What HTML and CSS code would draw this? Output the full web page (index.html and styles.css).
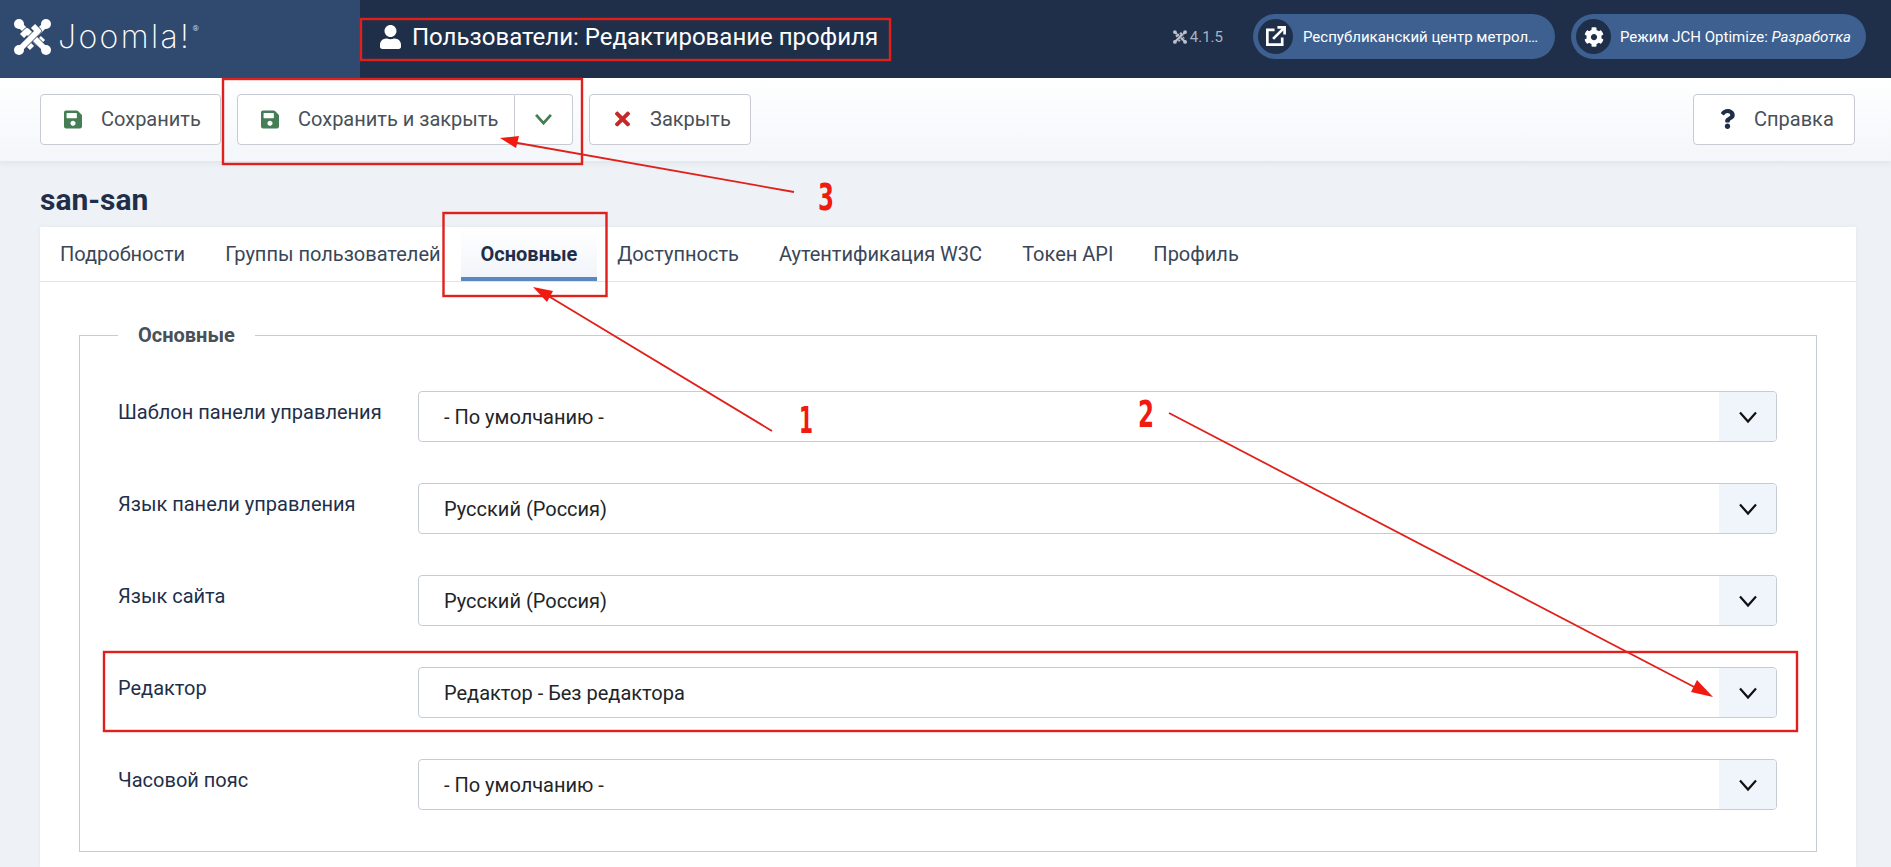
FILE: index.html
```html
<!DOCTYPE html>
<html lang="ru">
<head>
<meta charset="utf-8">
<title>Пользователи: Редактирование профиля</title>
<link rel="stylesheet" href="styles.css">
</head>
<body>
<svg class="defs" width="0" height="0" aria-hidden="true">
  <symbol id="i-save" viewBox="0 0 448 512"><path d="M433.941 129.941l-83.882-83.882A48 48 0 0 0 316.118 32H48C21.49 32 0 53.49 0 80v352c0 26.51 21.49 48 48 48h352c26.51 0 48-21.49 48-48V163.882a48 48 0 0 0-14.059-33.941zM224 416c-35.346 0-64-28.654-64-64 0-35.346 28.654-64 64-64s64 28.654 64 64c0 35.346-28.654 64-64 64zm96-304.52V212c0 6.627-5.373 12-12 12H76c-6.627 0-12-5.373-12-12V108c0-6.627 5.373-12 12-12h228.52c3.183 0 6.235 1.264 8.485 3.515l3.48 3.48A11.996 11.996 0 0 1 320 111.48z"/></symbol>
  <symbol id="i-times" viewBox="0 0 352 512"><path d="M242.72 256l100.07-100.07c12.28-12.28 12.28-32.19 0-44.48l-22.24-22.24c-12.28-12.28-32.19-12.28-44.48 0L176 189.28 75.93 89.21c-12.28-12.28-32.19-12.28-44.48 0L9.21 111.45c-12.28 12.28-12.28 32.19 0 44.48L109.28 256 9.21 356.07c-12.28 12.28-12.28 32.19 0 44.48l22.24 22.24c12.28 12.28 32.2 12.28 44.48 0L176 322.72l100.07 100.07c12.28 12.28 32.2 12.28 44.48 0l22.24-22.24c12.28-12.28 12.28-32.19 0-44.48L242.72 256z"/></symbol>
  <symbol id="i-question" viewBox="0 0 384 512"><path d="M202.021 0C122.202 0 70.503 32.703 29.914 91.026c-7.363 10.58-5.093 25.086 5.178 32.874l43.138 32.709c10.373 7.865 25.132 6.026 33.253-4.148 25.049-31.381 43.63-49.449 82.757-49.449 30.764 0 68.816 19.799 68.816 49.631 0 22.552-18.617 34.134-48.993 51.164-35.423 19.86-82.299 44.576-82.299 106.405V320c0 13.255 10.745 24 24 24h72.471c13.255 0 24-10.745 24-24v-5.773c0-42.86 125.268-44.645 125.268-160.627C377.504 66.256 286.902 0 202.021 0zM192 373.459c-38.196 0-69.271 31.075-69.271 69.271 0 38.195 31.075 69.27 69.271 69.27s69.271-31.075 69.271-69.271-31.075-69.27-69.271-69.27z"/></symbol>
  <symbol id="i-user" viewBox="0 0 448 512"><path d="M224 256c70.7 0 128-57.3 128-128S294.7 0 224 0 96 57.3 96 128s57.3 128 128 128zm89.6 32h-16.7c-22.2 10.2-46.9 16-72.9 16s-50.6-5.8-72.9-16h-16.7C60.2 288 0 348.2 0 422.4V464c0 26.5 21.5 48 48 48h352c26.5 0 48-21.5 48-48v-41.6c0-74.2-60.2-134.4-134.4-134.4z"/></symbol>
  <symbol id="i-cog" viewBox="0 0 512 512"><path d="M487.4 315.7l-42.6-24.6c4.3-23.2 4.3-47 0-70.2l42.6-24.6c4.9-2.8 7.1-8.6 5.5-14-11.1-35.6-30-67.8-54.7-94.6-3.8-4.1-10-5.1-14.8-2.3L380.8 110c-17.9-15.4-38.5-27.3-60.8-35.1V25.8c0-5.6-3.9-10.5-9.4-11.7-36.7-8.2-74.3-7.8-109.2 0-5.5 1.2-9.4 6.1-9.4 11.7V75c-22.2 7.9-42.8 19.8-60.8 35.1L88.7 85.5c-4.9-2.8-11-1.9-14.8 2.3-24.7 26.7-43.6 58.9-54.7 94.6-1.7 5.4.6 11.2 5.5 14L67.3 221c-4.3 23.2-4.3 47 0 70.2l-42.6 24.6c-4.9 2.8-7.1 8.6-5.5 14 11.1 35.6 30 67.8 54.7 94.6 3.8 4.1 10 5.1 14.8 2.3l42.6-24.6c17.9 15.4 38.5 27.3 60.8 35.1v49.2c0 5.6 3.9 10.5 9.4 11.7 36.7 8.2 74.3 7.8 109.2 0 5.5-1.2 9.4-6.1 9.4-11.7v-49.2c22.2-7.9 42.8-19.8 60.8-35.1l42.6 24.6c4.9 2.8 11 1.9 14.8-2.3 24.7-26.7 43.6-58.9 54.7-94.6 1.5-5.5-.7-11.3-5.6-14.1zM256 336c-44.1 0-80-35.9-80-80s35.9-80 80-80 80 35.9 80 80-35.9 80-80 80z"/></symbol>
  <symbol id="i-chev" viewBox="0 0 20 14"><path d="M2 2.5L10 11.5L18 2.5" fill="none" stroke="currentColor" stroke-width="2.2"/></symbol>
  <symbol id="i-chev-bold" viewBox="0 0 20 14"><path d="M2 2L10 11L18 2" fill="none" stroke="currentColor" stroke-width="3"/></symbol>
  <symbol id="i-joomla" viewBox="0 0 37 36">
    <g fill="none" stroke-linejoin="round">
      <path d="M6 6L24 24L29 19" stroke="var(--knot)" stroke-width="7.2"/><path d="M6 6L24 24L29 19" stroke="#fff" stroke-width="5.8"/>
      <path d="M31 6L13 24L18 29" stroke="var(--knot)" stroke-width="7.2"/><path d="M31 6L13 24L18 29" stroke="#fff" stroke-width="5.8"/>
      <path d="M31 30L13 12L8 17" stroke="var(--knot)" stroke-width="7.2"/><path d="M31 30L13 12L8 17" stroke="#fff" stroke-width="5.8"/>
      <path d="M6 30L24 12L19 7" stroke="var(--knot)" stroke-width="7.2"/><path d="M6 30L24 12L19 7" stroke="#fff" stroke-width="5.8"/>
    </g>
    <g fill="#fff"><circle cx="5" cy="5" r="5"/><circle cx="32" cy="5" r="5"/><circle cx="5" cy="31" r="5"/><circle cx="32" cy="31" r="5"/></g>
  </symbol>
</svg>

<header class="topbar">
  <div class="brand">
    <svg class="brand-icon"><use href="#i-joomla"/></svg>
    <span class="brand-word">Joomla!</span><sup class="brand-reg">®</sup>
  </div>
  <h1 class="page-title">
    <svg class="page-title-icon"><use href="#i-user"/></svg>
    <span>Пользователи: Редактирование профиля</span>
  </h1>
  <div class="top-right">
    <span class="version"><svg class="version-icon"><use href="#i-joomla"/></svg>4.1.5</span>
    <a class="pill pill-site">
      <span class="pill-icon">
        <svg class="ext-icon" viewBox="0 0 24 24" fill="none" stroke="#fff" stroke-width="2.8"><path d="M11 5H3.5v15.5H19V13"/><path d="M9.5 14.5L21 3"/><path d="M14 2.5h7.5V10"/></svg>
      </span>
      <span class="pill-text">Республиканский центр метрол…</span>
    </a>
    <a class="pill pill-mode">
      <span class="pill-icon"><svg class="cog-icon"><use href="#i-cog"/></svg></span>
      <span class="pill-text">Режим JCH Optimize: <em>Разработка</em></span>
    </a>
  </div>
</header>

<nav class="toolbar">
  <button class="btn btn-save"><svg class="ico-save"><use href="#i-save"/></svg>Сохранить</button>
  <div class="btn-group">
    <button class="btn btn-main btn-save-close"><svg class="ico-save"><use href="#i-save"/></svg>Сохранить и закрыть</button>
    <button class="btn btn-drop"><svg class="ico-drop"><use href="#i-chev-bold"/></svg></button>
  </div>
  <button class="btn btn-close"><svg class="ico-times"><use href="#i-times"/></svg>Закрыть</button>
  <button class="btn btn-help"><svg class="ico-help"><use href="#i-question"/></svg>Справка</button>
</nav>

<main class="content">
  <h2 class="user-name">san-san</h2>
  <section class="card">
    <div class="tabs">
      <a class="tab">Подробности</a>
      <a class="tab">Группы пользователей</a>
      <a class="tab tab-active">Основные</a>
      <a class="tab">Доступность</a>
      <a class="tab">Аутентификация W3C</a>
      <a class="tab">Токен API</a>
      <a class="tab">Профиль</a>
    </div>
    <div class="card-body">
      <fieldset class="group">
        <legend class="group-title">Основные</legend>
        <div class="row"><label class="row-label">Шаблон панели управления</label><div class="select"><span class="select-value">- По умолчанию -</span><span class="select-arrow"><svg><use href="#i-chev"/></svg></span></div></div>
        <div class="row"><label class="row-label">Язык панели управления</label><div class="select"><span class="select-value">Русский (Россия)</span><span class="select-arrow"><svg><use href="#i-chev"/></svg></span></div></div>
        <div class="row"><label class="row-label">Язык сайта</label><div class="select"><span class="select-value">Русский (Россия)</span><span class="select-arrow"><svg><use href="#i-chev"/></svg></span></div></div>
        <div class="row"><label class="row-label">Редактор</label><div class="select"><span class="select-value">Редактор - Без редактора</span><span class="select-arrow"><svg><use href="#i-chev"/></svg></span></div></div>
        <div class="row"><label class="row-label">Часовой пояс</label><div class="select"><span class="select-value">- По умолчанию -</span><span class="select-arrow"><svg><use href="#i-chev"/></svg></span></div></div>
      </fieldset>
    </div>
  </section>
</main>

<svg class="annotations" viewBox="0 0 1891 867" width="1891" height="867" aria-hidden="false">
  <g class="anno-box">
    <rect x="361" y="19" width="529" height="41"/>
    <rect x="223" y="79" width="359" height="85"/>
    <rect x="443.5" y="213" width="163" height="83"/>
    <rect x="104" y="652" width="1693" height="79"/>
  </g>
  <g class="anno-line">
    <line x1="772" y1="431" x2="545" y2="294"/>
    <line x1="1169" y1="413" x2="1700" y2="690"/>
    <line x1="794" y1="192" x2="512" y2="142"/>
  </g>
  <g class="anno-head">
    <polygon points="533,287 553,291 547,302"/>
    <polygon points="1713,697 1691,692 1697,680"/>
    <polygon points="500,138 519,136 516,148"/>
  </g>
  <g class="anno-num">
    <text x="799" y="433" textLength="14" lengthAdjust="spacingAndGlyphs">1</text>
    <text x="1138" y="427" textLength="16" lengthAdjust="spacingAndGlyphs">2</text>
    <text x="818" y="210" textLength="16" lengthAdjust="spacingAndGlyphs">3</text>
  </g>
</svg>
</body>
</html>
```

FILE: styles.css
```css
* { box-sizing: border-box; }
html, body { margin: 0; height: 100%; overflow: hidden; }
body {
  position: relative;
  display: flex;
  flex-direction: column;
  background: #eef2f6;
  color: #1f2f4a;
  font-family: Roboto, "Noto Sans", sans-serif;
  --knot: #30496e;
}
.defs { position: absolute; }

/* top bar */
.topbar { flex: none; height: 78px; display: flex; align-items: center; background: #1f2f4a; color: #fff; }
.brand { flex: none; width: 360px; height: 100%; background: #30496e; position: relative; display: flex; align-items: center; padding: 0 0 5px 14px; }
.brand-icon { width: 37px; height: 36px; flex: none; margin-right: 7px; }
.brand-word { font-family: Inter, sans-serif; font-weight: 200; font-size: 32px; letter-spacing: 2.4px; line-height: 1; }
.brand-reg { font-size: 8px; align-self: flex-start; margin: 24px 0 0 1px; color: #c9d4e4; }
.page-title { margin: 0 0 4px; padding-left: 20px; display: flex; align-items: center; gap: 11px; font-size: 24px; font-weight: 400; white-space: nowrap; }
.page-title-icon { width: 21px; height: 24px; fill: #fff; flex: none; }
.top-right { margin: 0 0 5px auto; display: flex; align-items: center; padding-right: 25px; }
.version { display: flex; align-items: center; gap: 3px; font-size: 15px; color: #aab4c2; margin-right: 14px; --knot: #1f2f4a; }
.version-icon { width: 14px; height: 14px; opacity: .7; }
.pill { height: 45px; border-radius: 23px; background: #3d6090; display: flex; align-items: center; padding-left: 5px; margin-left: 16px; font-size: 15px; color: #fff; white-space: nowrap; }
.pill-site { width: 302px; }
.pill-mode { width: 295px; }
.pill-icon { flex: none; width: 35px; height: 35px; border-radius: 50%; background: #1f2f4a; display: flex; align-items: center; justify-content: center; margin-right: 10px; }
.pill-mode .pill-icon { margin-right: 9px; }
.ext-icon { width: 23px; height: 23px; }
.cog-icon { width: 20px; height: 20px; fill: #fff; }

/* toolbar */
.toolbar { flex: none; height: 83px; display: flex; align-items: flex-start; padding: 16px 36px 0 40px; background: linear-gradient(#fff, #f3f6fa); box-shadow: 0 2px 6px rgba(40,60,90,.08); position: relative; }
.btn { height: 51px; display: inline-flex; align-items: center; background: #fff; border: 1px solid #c8ccd2; border-radius: 4px; font: 400 20px Roboto, sans-serif; color: #495057; padding: 0 0 1px; white-space: nowrap; }
.btn svg { flex: none; }
.btn-save { width: 181px; padding-left: 23px; gap: 19px; }
.btn-group { display: flex; margin-left: 16px; }
.btn-save-close { width: 278px; padding-left: 23px; gap: 19px; border-radius: 4px 0 0 4px; border-right: 1px solid #c8ccd2; }
.btn-drop { width: 58px; justify-content: center; border-left: 0; border-radius: 0 4px 4px 0; }
.btn-close { width: 162px; margin-left: 16px; padding-left: 25px; gap: 20px; }
.btn-help { width: 162px; margin-left: auto; padding-left: 26px; gap: 19px; }
.ico-save { width: 18px; height: 21px; fill: #457d54; }
.ico-times { width: 15px; height: 22px; fill: #c52827; }
.ico-help { width: 15px; height: 20px; fill: #1f2f4a; }
.ico-drop { width: 19px; height: 13px; color: #457d54; }

/* content */
.content { flex: 1; min-height: 0; padding: 0 35px 0 40px; display: flex; flex-direction: column; }
.user-name { margin: 0; height: 66px; display: flex; align-items: center; padding-top: 10px; font-size: 30px; font-weight: 700; color: #1f2f4a; }
.card { flex: 1; background: #fff; box-shadow: 0 0 4px rgba(40,60,90,.06); }
.tabs { height: 55px; display: flex; border-bottom: 1px solid #dfe3e8; }
.tab { display: flex; align-items: center; padding: 0 20px 1px; font-size: 20px; color: #3a4657; position: relative; white-space: nowrap; }
.tab-active { font-weight: 700; color: #1f2f4a; background: linear-gradient(#fff, #f1f5fa); border-bottom: 4px solid #5b87c0; height: 54px; padding-top: 4px; }
.card-body { padding: 41px 39px 0 39px; }
.group { margin: 0; border: 1px solid #c5ccd5; border-radius: 0; padding: 44px 39px 0 38px; height: 529px; }
.group-title { margin-left: 0; padding: 0 20px; font-size: 20px; font-weight: 700; color: #495057; line-height: 24px; }
.row { display: flex; height: 51px; margin-bottom: 41px; }
.row-label { flex: none; width: 300px; font-size: 20px; color: #1f2f4a; line-height: 24px; padding-top: 9px; }
.select { flex: 1; display: flex; height: 51px; border: 1px solid #c5ccd5; border-radius: 4px; background: #fff; overflow: hidden; }
.select-value { flex: 1; display: flex; align-items: center; padding: 0 0 0 25px; font-size: 20px; color: #212529; }
.select-arrow { flex: none; width: 57px; background: #f0f4fb; display: flex; align-items: center; justify-content: center; color: #111; }
.select-arrow svg { width: 20px; height: 14px; }

/* annotations drawn over the screenshot */
.annotations { position: absolute; left: 0; top: 0; pointer-events: none; }
.anno-box rect { fill: none; stroke: #e0201b; stroke-width: 2.4; }
.anno-line line { stroke: #e0201b; stroke-width: 1.8; }
.anno-head polygon { fill: #f01a10; }
.anno-num text { fill: #f01a10; font-family: "DejaVu Sans", sans-serif; font-weight: 700; font-size: 38px; }
```
